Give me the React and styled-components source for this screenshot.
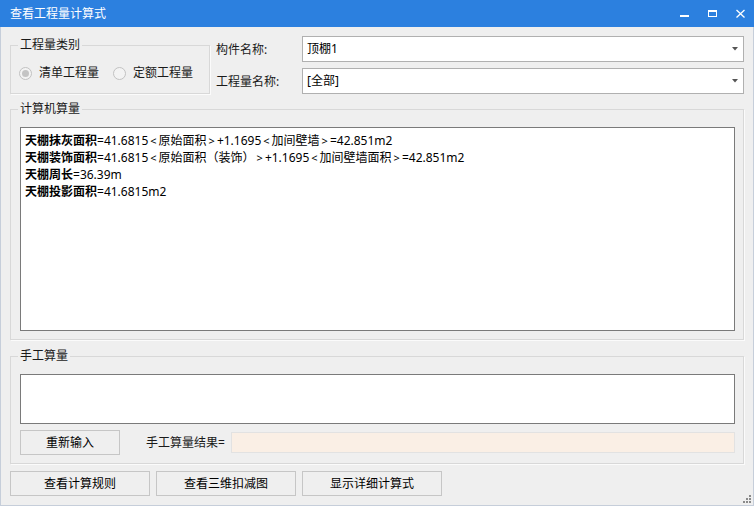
import React from 'react'
import styled, { createGlobalStyle } from 'styled-components'

const GlobalStyle = createGlobalStyle`
  html, body {
    margin: 0;
    padding: 0;
    background: #efefef;
  }
  body {
    font-family: "Noto Sans", "Noto Sans CJK SC", sans-serif;
    font-size: 12px;
    color: #1a1a1a;
  }
  * { box-sizing: border-box; }
`

const Window = styled.div`
  width: 754px;
  height: 506px;
  display: flex;
  flex-direction: column;
  background: #efefef;
  position: relative;
`

const TitleBar = styled.div`
  height: 27px;
  flex: none;
  background: #2c80df;
  display: flex;
  align-items: center;
  color: #fff;
  padding-left: 10px;
`

const Title = styled.span`
  flex: 1;
  font-size: 12px;
  line-height: 14px;
`

const CtrlButton = styled.div`
  width: 28px;
  height: 27px;
  display: flex;
  align-items: center;
  justify-content: center;
`

const Body = styled.div`
  flex: 1;
  border: 1px solid #c6ceda;
  border-top: none;
  padding: 0 9px;
  display: flex;
  flex-direction: column;
`

const TopRow = styled.div`
  display: flex;
  margin-top: 9px;
  height: 58px;
`

const Group = styled.fieldset`
  margin: 0;
  padding: 0 8px ${p => p.$bottom || 0}px 9px;
  border: 1px solid #d8d8d8;
  box-shadow: 1px 1px 0 #fbfbfb;
  min-width: 0;
  width: ${p => p.$width || 'auto'};
  height: ${p => p.$height}px;
  margin-top: ${p => p.$top || 0}px;
  flex: none;
`

const Legend = styled.legend`
  padding: 0 2px;
  margin-left: -2px;
  font-size: 12px;
  line-height: 14px;
  color: #1a1a1a;
`

const RadioRow = styled.div`
  display: flex;
  align-items: center;
  margin-top: 14px;
  margin-left: -1px;
  height: 14px;
`

const RadioItem = styled.label`
  display: flex;
  align-items: center;
  flex: none;
  gap: 7px;
  margin-right: 14px;
  line-height: 14px;
  white-space: nowrap;
`

const RadioCircle = styled.span`
  width: 13px;
  height: 13px;
  flex: none;
  border-radius: 50%;
  border: 1px solid #c2c2c2;
  background: #f3f3f3;
  display: flex;
  align-items: center;
  justify-content: center;
  &::after {
    content: '';
    width: 7px;
    height: 7px;
    border-radius: 50%;
    background: ${p => (p.$checked ? '#c4c4c4' : 'transparent')};
  }
`

const FieldColumn = styled.div`
  flex: 1;
  display: flex;
  flex-direction: column;
  gap: 6px;
  margin-left: 6px;
`

const FieldRow = styled.div`
  display: flex;
  align-items: center;
  height: 26px;
`

const FieldLabel = styled.span`
  width: 86px;
  flex: none;
  line-height: 14px;
  padding-top: 2px;
`

const Combo = styled.div`
  flex: 1;
  height: 26px;
  border: 1px solid #b0b0b0;
  background: #fff;
  display: flex;
  align-items: center;
  justify-content: space-between;
  padding: 0 5px 0 4px;
  line-height: 14px;
  color: #000;
`

const TextBox = styled.div`
  border: 1px solid #7a7a7a;
  background: #fff;
  height: ${p => p.$height}px;
  margin-top: ${p => p.$top}px;
  padding: 4px 4px;
  color: #000;
`

const Line = styled.div`
  line-height: 17px;
  white-space: nowrap;
`

const Strong = styled.b`
  font-weight: 700;
`

const Bracket = styled.span`
  font-size: 11px;
  margin: 0 2px;
`

const ManualRow = styled.div`
  display: flex;
  align-items: center;
  margin-top: 6px;
  height: 25px;
`

const Button = styled.div`
  width: ${p => p.$width}px;
  height: 25px;
  border: 1px solid #c6c6c6;
  background: #efefef;
  display: flex;
  align-items: center;
  justify-content: center;
  color: #000;
  line-height: 14px;
  flex: none;
`

const ResultLabel = styled.span`
  margin-left: 26px;
  margin-right: 6px;
  line-height: 14px;
`

const ResultField = styled.div`
  flex: 1;
  height: 21px;
  background: #faefe5;
  border: 1px solid #e2e2e2;
`

const ButtonBar = styled.div`
  display: flex;
  gap: 6px;
  margin-top: 7px;
`

const Grip = styled.svg`
  position: absolute;
  right: 3px;
  bottom: 3px;
`

const lines = [
  ['天棚抹灰面积', '=41.6815<原始面积>+1.1695<加间壁墙>=42.851m2'],
  ['天棚装饰面积', '=41.6815<原始面积（装饰）>+1.1695<加间壁墙面积>=42.851m2'],
  ['天棚周长', '=36.39m'],
  ['天棚投影面积', '=41.6815m2']
]

function Formula ({ text }) {
  const parts = text.split(/([<>])/)
  return parts.map((p, i) =>
    p === '<' || p === '>' ? <Bracket key={i}>{p}</Bracket> : p
  )
}

function Arrow () {
  return (
    <svg width='6' height='4' viewBox='0 0 6 4'>
      <polygon points='0,0 6,0 3,3.5' fill='#555' />
    </svg>
  )
}

export default function App () {
  return (
    <>
      <GlobalStyle />
      <Window>
        <TitleBar>
          <Title>查看工程量计算式</Title>
          <CtrlButton>
            <svg width='9' height='9' viewBox='0 0 9 9'>
              <rect x='0' y='6' width='9' height='2' fill='#fff' />
            </svg>
          </CtrlButton>
          <CtrlButton>
            <svg width='9' height='9' viewBox='0 0 9 9'>
              <rect x='0.5' y='1.5' width='8' height='6' fill='none' stroke='#fff' />
              <rect x='0' y='1' width='9' height='2' fill='#fff' />
            </svg>
          </CtrlButton>
          <CtrlButton>
            <svg width='9' height='9' viewBox='0 0 9 9'>
              <path d='M0.5 1 L8.5 8.5 M8.5 1 L0.5 8.5' stroke='#fff' strokeWidth='1.3' />
            </svg>
          </CtrlButton>
        </TitleBar>
        <Body>
          <TopRow>
            <Group $width='200px' $height={56} $top={2}>
              <Legend>工程量类别</Legend>
              <RadioRow>
                <RadioItem>
                  <RadioCircle $checked />
                  清单工程量
                </RadioItem>
                <RadioItem>
                  <RadioCircle />
                  定额工程量
                </RadioItem>
              </RadioRow>
            </Group>
            <FieldColumn>
              <FieldRow>
                <FieldLabel>构件名称:</FieldLabel>
                <Combo>顶棚1<Arrow /></Combo>
              </FieldRow>
              <FieldRow>
                <FieldLabel>工程量名称:</FieldLabel>
                <Combo>[全部]<Arrow /></Combo>
              </FieldRow>
            </FieldColumn>
          </TopRow>
          <Group $height={238} $top={8} $bottom={8}>
            <Legend>计算机算量</Legend>
            <TextBox $height={204} $top={11}>
              {lines.map(([b, rest]) => (
                <Line key={b}><Strong>{b}</Strong><Formula text={rest} /></Line>
              ))}
            </TextBox>
          </Group>
          <Group $height={115} $top={9} $bottom={8}>
            <Legend>手工算量</Legend>
            <TextBox $height={50} $top={11} />
            <ManualRow>
              <Button $width={100}>重新输入</Button>
              <ResultLabel>手工算量结果=</ResultLabel>
              <ResultField />
            </ManualRow>
          </Group>
          <ButtonBar>
            <Button $width={140}>查看计算规则</Button>
            <Button $width={140}>查看三维扣减图</Button>
            <Button $width={140}>显示详细计算式</Button>
          </ButtonBar>
        </Body>
        <Grip width='9' height='9' viewBox='0 0 9 9'>
          <rect x='7' y='1' width='2' height='2' fill='#8a8a8a' />
          <rect x='4' y='4' width='2' height='2' fill='#8a8a8a' />
          <rect x='7' y='4' width='2' height='2' fill='#8a8a8a' />
          <rect x='1' y='7' width='2' height='2' fill='#8a8a8a' />
          <rect x='4' y='7' width='2' height='2' fill='#8a8a8a' />
          <rect x='7' y='7' width='2' height='2' fill='#8a8a8a' />
        </Grip>
      </Window>
    </>
  )
}
